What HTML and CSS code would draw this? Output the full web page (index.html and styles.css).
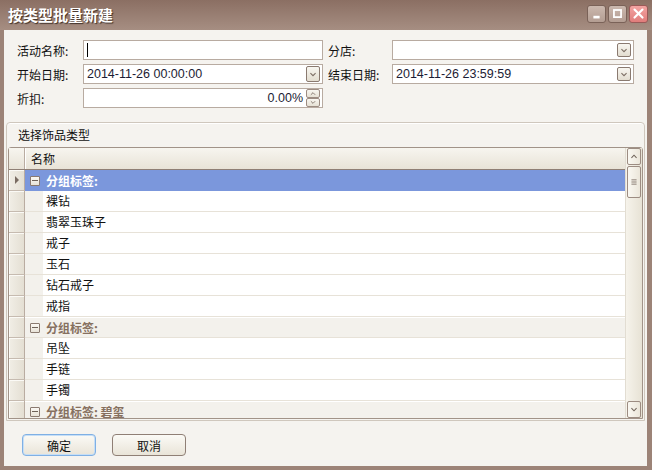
FILE: index.html
```html
<!DOCTYPE html>
<html lang="zh-CN">
<head>
  <meta charset="UTF-8">
  <title>按类型批量新建</title>
  <link rel="stylesheet" href="styles.css">
</head>
<body>
  <div class="window">
    <div class="titlebar">
      <span class="title">按类型批量新建</span>
      <div class="caption-btns">
        <span class="cap-btn"><svg viewBox="0 0 19 18"><rect x="6" y="11" width="7" height="3" fill="#fff"/></svg></span>
        <span class="cap-btn"><svg viewBox="0 0 19 18"><rect x="5.5" y="4.5" width="8" height="8" fill="none" stroke="#fff" stroke-width="2"/></svg></span>
        <span class="cap-btn close"><svg viewBox="0 0 19 18"><path d="M5 4 L14 13 M14 4 L5 13" stroke="#fff" stroke-width="2.4" stroke-linecap="round"/></svg></span>
      </div>
    </div>

    <div class="frame">
      <div class="form">
        <label>活动名称:</label>
        <div class="field"><span class="caret"></span><span class="val"></span></div>
        <label>分店:</label>
        <div class="field"><span class="val"></span><span class="drop"><svg viewBox="0 0 14 14"><path d="M4 6 L7 9 L10 6" fill="none" stroke="#7a6c62" stroke-width="1.2"/></svg></span></div>

        <label>开始日期:</label>
        <div class="field"><span class="val">2014-11-26 00:00:00</span><span class="drop tall"><svg viewBox="0 0 14 16"><path d="M4 7 L7 10 L10 7" fill="none" stroke="#7a6c62" stroke-width="1.2"/></svg></span></div>
        <label>结束日期:</label>
        <div class="field"><span class="val">2014-11-26 23:59:59</span><span class="drop"><svg viewBox="0 0 14 14"><path d="M4 6 L7 9 L10 6" fill="none" stroke="#7a6c62" stroke-width="1.2"/></svg></span></div>

        <label>折扣:</label>
        <div class="field"><span class="val num">0.00%</span>
          <span class="spin">
            <span class="spin-btn"><svg viewBox="0 0 14 8"><path d="M4.5 5.5 L7 3 L9.5 5.5" fill="none" stroke="#7a6c62" stroke-width="1"/></svg></span>
            <span class="spin-btn"><svg viewBox="0 0 14 8"><path d="M4.5 2.5 L7 5 L9.5 2.5" fill="none" stroke="#7a6c62" stroke-width="1"/></svg></span>
          </span>
        </div>
      </div>

      <div class="group">
        <div class="group-head">选择饰品类型</div>
        <div class="grid">
          <div class="grid-main">
            <div class="grid-header">
              <div class="ind"></div>
              <div class="col">名称</div>
            </div>
            <div class="rows">
              <div class="row group-row selected"><div class="ind"><span class="arrow"></span></div><div class="cell"><span class="minus"></span><b>分组标签:</b></div></div>
              <div class="row"><div class="ind"></div><div class="cell"><span class="indent"></span><span class="txt">裸钻</span></div></div>
              <div class="row"><div class="ind"></div><div class="cell"><span class="indent"></span><span class="txt">翡翠玉珠子</span></div></div>
              <div class="row"><div class="ind"></div><div class="cell"><span class="indent"></span><span class="txt">戒子</span></div></div>
              <div class="row"><div class="ind"></div><div class="cell"><span class="indent"></span><span class="txt">玉石</span></div></div>
              <div class="row"><div class="ind"></div><div class="cell"><span class="indent"></span><span class="txt">钻石戒子</span></div></div>
              <div class="row"><div class="ind"></div><div class="cell"><span class="indent"></span><span class="txt">戒指</span></div></div>
              <div class="row group-row"><div class="ind"></div><div class="cell"><span class="minus"></span><b>分组标签:</b></div></div>
              <div class="row"><div class="ind"></div><div class="cell"><span class="indent"></span><span class="txt">吊坠</span></div></div>
              <div class="row"><div class="ind"></div><div class="cell"><span class="indent"></span><span class="txt">手链</span></div></div>
              <div class="row"><div class="ind"></div><div class="cell"><span class="indent"></span><span class="txt">手镯</span></div></div>
              <div class="row group-row"><div class="ind"></div><div class="cell"><span class="minus"></span><b>分组标签: 碧玺</b></div></div>
            </div>
          </div>
          <div class="vscroll">
            <span class="sb-btn"><svg viewBox="0 0 14 15"><path d="M4 9 L7 6 L10 9" fill="none" stroke="#6e6258" stroke-width="1.2"/></svg></span>
            <span class="sb-thumb"><svg viewBox="0 0 14 30"><path d="M4 12.5 H10 M4 15 H10 M4 17.5 H10" stroke="#7a6c62" stroke-width="1"/></svg></span>
            <span class="sb-btn down"><svg viewBox="0 0 14 15"><path d="M4 6 L7 9 L10 6" fill="none" stroke="#6e6258" stroke-width="1.2"/></svg></span>
          </div>
        </div>
      </div>

      <div class="footer">
        <button class="btn default">确定</button>
        <button class="btn">取消</button>
      </div>
    </div>
  </div>
</body>
</html>
```

FILE: styles.css
```css
body {
  margin: 0;
  background: #fff;
  font-family: "Noto Sans CJK SC", sans-serif;
  font-size: 12px;
  color: #111;
}
.window {
  width: 652px;
  height: 470px;
  display: flex;
  flex-direction: column;
  background: #f5f3ef;
}
.titlebar {
  height: 30px;
  flex: none;
  box-sizing: border-box;
  background: linear-gradient(#8b6f63, #a68e82);
  display: flex;
  justify-content: space-between;
  padding: 0 4px 0 8px;
}
.title {
  color: #fff;
  font-weight: bold;
  font-size: 15px;
  line-height: 30px;
  text-shadow: 1px 1px 1px #3e2f28;
}
.caption-btns {
  display: flex;
  gap: 2px;
  margin-top: 5px;
}
.cap-btn {
  width: 19px;
  height: 18px;
  box-sizing: border-box;
  border: 1px solid #7a6258;
  border-radius: 3px;
  background: linear-gradient(#cbb8ae, #b39d92);
  display: flex;
}
.cap-btn svg {
  width: 100%;
  height: 100%;
}
.cap-btn.close {
  background: linear-gradient(#f3a4a2, #e07d7b);
  border-color: #9a5a58;
}
.frame {
  flex: 1;
  display: flex;
  flex-direction: column;
  border-left: 4px solid #9c8377;
  border-right: 5px solid #9c8377;
  border-bottom: 4px solid #9c8377;
  min-height: 0;
}
.form {
  display: grid;
  grid-template-columns: 61px 240px 59px 242px;
  grid-auto-rows: 20px;
  column-gap: 5px;
  row-gap: 4px;
  align-items: center;
  padding: 10px 13px 0 13px;
}
.form label {
  white-space: nowrap;
}
.field {
  height: 20px;
  box-sizing: border-box;
  border: 1px solid #b8aba1;
  background: #fff;
  display: flex;
  align-items: center;
  padding: 0 2px 0 3px;
}
.field .val {
  flex: 1;
  font-family: "Liberation Sans", sans-serif;
  font-size: 12.5px;
  color: #1c1c34;
}
.field .val.num {
  text-align: right;
  padding-right: 3px;
}
.caret {
  width: 1px;
  height: 14px;
  background: #000;
}
.drop {
  width: 14px;
  height: 14px;
  box-sizing: border-box;
  border: 1px solid #8a7a70;
  border-radius: 2px;
  background: linear-gradient(#f8f6f0, #e3ddd0);
  display: flex;
}
.drop.tall {
  height: 16px;
}
.drop svg, .spin-btn svg, .sb-btn svg, .sb-thumb svg {
  width: 100%;
  height: 100%;
}
.spin {
  display: flex;
  flex-direction: column;
  width: 14px;
  height: 18px;
}
.spin-btn {
  flex: 1;
  display: flex;
  box-sizing: border-box;
  border: 1px solid #9c8c82;
  border-radius: 2px;
  background: linear-gradient(#f8f6f0, #e6e1d5);
}
.group {
  margin: 14px 2px 0 2px;
  border: 1px solid #cfc7bd;
  border-radius: 4px 4px 0 0;
  padding-bottom: 1px;
  box-shadow: inset 0 1px 0 #fff;
}
.group-head {
  height: 24px;
  line-height: 24px;
  padding-left: 11px;
}
.grid {
  margin: 0 1px;
  height: 272px;
  box-sizing: border-box;
  border: 1px solid #a19388;
  border-radius: 3px 3px 0 0;
  display: flex;
  background: #fff;
}
.grid-main {
  flex: 1;
  display: flex;
  flex-direction: column;
  overflow: hidden;
}
.grid-header {
  display: flex;
  height: 21px;
  flex: none;
  border-bottom: 1px solid #8f7f75;
  background: linear-gradient(#f7f5ef, #e8e3d7);
}
.grid-header .col {
  flex: 1;
  line-height: 21px;
  padding-left: 5px;
  border-left: 1px solid #fff;
}
.ind {
  width: 16px;
  flex: none;
  box-sizing: border-box;
  border-right: 1px solid #b9aca1;
  display: flex;
  align-items: center;
  justify-content: center;
}
.rows {
  flex: 1;
  overflow: hidden;
}
.row {
  display: flex;
  height: 21px;
  box-sizing: border-box;
}
.row .ind {
  background: linear-gradient(90deg, #f1eee6, #e4dfd3);
  border-bottom: 1px solid #c6bbb0;
  box-shadow: inset 1px 1px 0 #fbfaf6;
}
.arrow {
  width: 0;
  height: 0;
  border-top: 4px solid transparent;
  border-bottom: 4px solid transparent;
  border-left: 4px solid #7a6c62;
}
.cell {
  flex: 1;
  display: flex;
  align-items: stretch;
  background: #f3f1ec;
  border-bottom: 1px solid #e7e2d8;
}
.indent {
  width: 18px;
  flex: none;
}
.txt {
  flex: 1;
  background: #fff;
  line-height: 20px;
  padding-left: 3px;
}
.group-row .cell {
  align-items: center;
  padding-left: 5px;
  border-top: 1px solid #fff;
  box-sizing: border-box;
}
.group-row b {
  color: #86705f;
  margin-left: 6px;
}
.minus {
  width: 10px;
  height: 10px;
  box-sizing: border-box;
  border: 1px solid #8a7a70;
  border-radius: 1px;
  background: linear-gradient(#faf8f3, #e8e3d8);
  display: flex;
  align-items: center;
  justify-content: center;
}
.minus::after {
  content: "";
  width: 6px;
  height: 1px;
  background: #6e6258;
}
.group-row.selected .cell {
  background: #7b97dc;
  border-top-color: #7b97dc;
  border-bottom-color: #7b97dc;
}
.group-row.selected b {
  color: #fff;
}
.vscroll {
  width: 17px;
  flex: none;
  display: flex;
  flex-direction: column;
  gap: 1px;
  padding: 0 1px 0 1px;
  box-sizing: border-box;
  background: linear-gradient(90deg, #f6f3eb, #e7e2d5);
  border-left: 1px solid #e2ddd2;
}
.sb-btn, .sb-thumb {
  display: flex;
  box-sizing: border-box;
  border: 1px solid #9c8c82;
  border-radius: 2px;
  background: linear-gradient(90deg, #faf8f2, #ebe6da);
}
.sb-btn {
  height: 17px;
}
.sb-thumb {
  height: 32px;
}
.sb-btn.down {
  margin-top: auto;
}
.footer {
  flex: 1;
  display: flex;
  gap: 16px;
  align-items: flex-start;
  padding: 13px 0 0 18px;
}
.btn {
  width: 74px;
  height: 22px;
  border: 1px solid #8f7f75;
  border-radius: 4px;
  background: linear-gradient(#fbfaf6, #e9e4d8);
  font-family: "Noto Sans CJK SC", sans-serif;
  font-size: 12px;
  color: #111;
  padding: 0;
}
.btn.default {
  border-color: #7fb0e4;
  box-shadow: inset 0 0 0 1px #c6def6;
}
```
